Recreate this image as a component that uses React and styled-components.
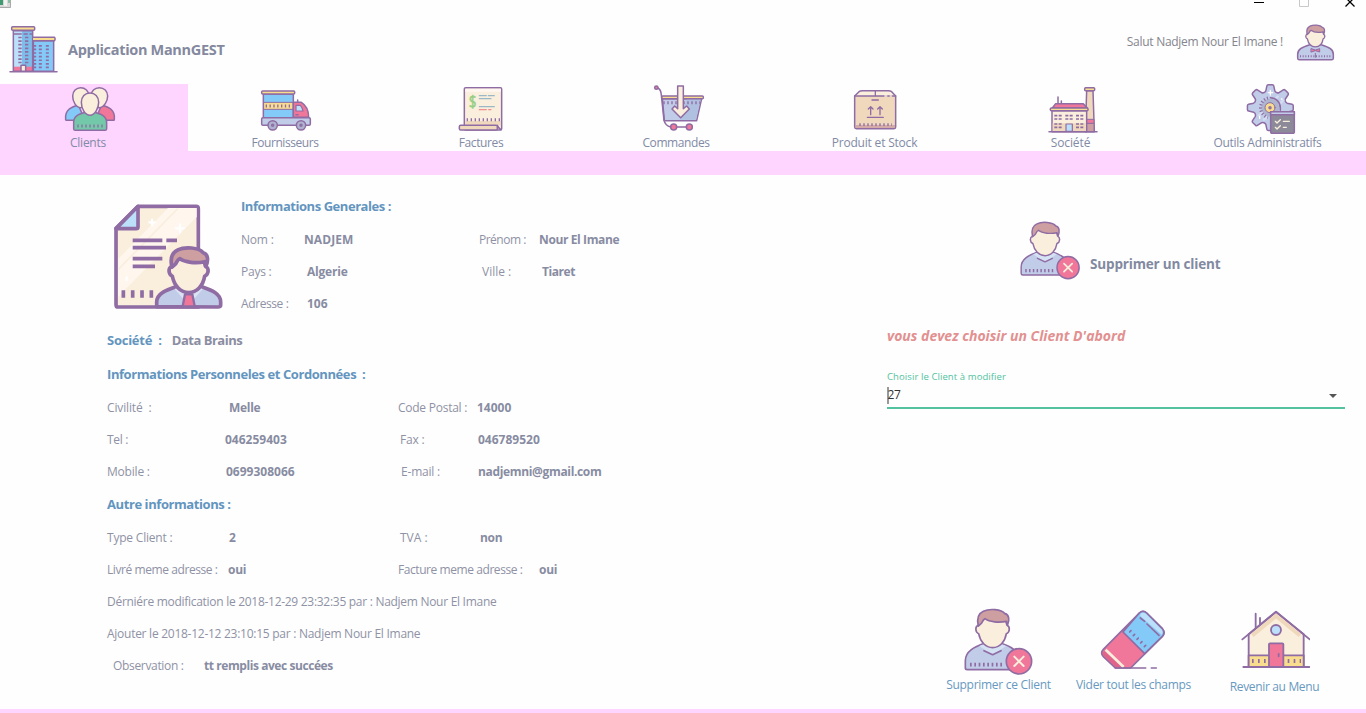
import React from 'react';
import styled, { createGlobalStyle, css } from 'styled-components';

const c = {
  pink: '#fdd5fe', line: '#8f6ca3', blue: '#84caf8', pale: '#bce0f9', yellow: '#f9dd8f',
  rose: '#f0779a', skin: '#faeedd', shirt: '#c0cce8', hair: '#cd9fa1', tan: '#f0d8bd',
};

const Global = createGlobalStyle`
  * { box-sizing: border-box; }
  body { margin: 0; background: #fff; overflow: hidden; }
`;

const Page = styled.div`
  width: 1366px; height: 713px; display: flex; flex-direction: column;
  font-family: 'Open Sans', 'Noto Sans', sans-serif; font-size: 12px; color: #8a8ea4;
  background: #fefefe; overflow: hidden;
`;
const TitleBar = styled.div`
  height: 10px; display: flex; justify-content: space-between; align-items: flex-start; flex: none;
`;
const Header = styled.header`
  height: 74px; flex: none; display: flex; align-items: flex-start; padding: 15px 31px 0 9px;
`;
const T = styled.span`
  white-space: pre; letter-spacing: ${p => p.$ls || 0}px; line-height: 20px;
`;
const AppName = styled(T)`
  font-size: 14.5px; font-weight: 700; color: #84899f; margin: 15px auto 0 10px;
`;
const Greeting = styled(T)`
  color: #85858c; margin: 7px 13px 0 0;
`;
const Avatar = styled.div`margin-top: -2px; display: flex;`;

const Nav = styled.nav`
  height: 67px; flex: none; display: grid;
  grid-template-columns: 197px 196px 195px 198.5px 196px 197px 1fr;
`;
const Tab = styled.div`
  width: 188px; height: 67px; background: ${p => (p.$active ? c.pink : 'transparent')};
`;
const TabContent = styled.div`
  width: 176px; display: flex; flex-direction: column; align-items: center;
`;
const TabLabel = styled(T)`
  color: #828aa5; line-height: 18px;
`;
const Band = styled.div`height: 24px; flex: none; background: ${c.pink};`;

const Main = styled.main`
  flex: 1; display: flex; min-height: 0;
`;
const Details = styled.section`
  width: 887px; flex: none; padding: 15px 0 0 107px;
`;
const Summary = styled.div`display: flex; margin-bottom: 4px;`;
const Portrait = styled.div`width: 134px; padding: 13px 0 0 6px;`;
const Row = styled.div`
  height: 32px; display: flex; align-items: center;
  ${p => p.$head && css`margin-bottom: 2px;`}
`;
const Cell = styled.div`
  width: ${p => (p.$w ? `${p.$w}px` : 'auto')}; padding-left: ${p => p.$pad || 0}px;
  display: flex; align-items: center; flex: none;
`;
const Label = styled(T)`color: #8f92a5;`;
const Value = styled(T)`font-weight: 700; color: #888ca2;`;
const Heading = styled(T)`font-size: 13px; font-weight: 700; color: #6395be;`;
const Company = styled(Heading)`color: #8a8da1; margin-left: 10px;`;

const Side = styled.section`
  width: 458px; display: flex; flex-direction: column;
`;
const SideTitle = styled.div`
  display: flex; align-items: flex-start; padding: 46px 0 0 132.5px; height: 151px;
`;
const SideName = styled(T)`
  font-size: 13.5px; font-weight: 700; color: #8289a0; margin: 33px 0 0 10px;
`;
const Warning = styled(T)`
  font-size: 14px; font-weight: 700; font-style: italic; color: #e29090;
`;
const FieldLabel = styled(T)`
  margin-top: 22px; font-size: 9.5px; line-height: 17px; color: #52c2a0;
`;
const Select = styled.div`
  height: 24px; border-bottom: 2px solid #52c2a0; display: flex; align-items: center;
  justify-content: space-between; padding-right: 8px; color: #333;
`;
const Typed = styled(T)`
  border-left: 2px solid #999; line-height: 15px; height: 17px; text-indent: -1.5px; margin-top: -2px;
`;
const Actions = styled.div`
  margin-top: auto; height: 108px; display: flex; align-items: flex-start;
`;
const Action = styled.div`
  display: flex; flex-direction: column; align-items: center; flex: none;
  width: ${p => p.$w}px; margin-left: ${p => p.$gap}px; padding-top: 7px;
`;
const ActionLabel = styled(T)`color: #6899c0; margin-top: ${p => p.$mt || 0}px; line-height: 18px;`;
const Footer = styled.footer`height: 4px; flex: none; background: ${c.pink};`;

const Svg = ({ box, w, h, sw = 4.5, children }) => (
  <svg viewBox={box} width={w} height={h} fill="none" stroke={c.line} strokeWidth={sw}
    strokeLinejoin="round" strokeLinecap="round" display="block">{children}</svg>
);
const Dash = ({ d, w = 7, a = '4 8', s = c.line }) => (
  <path d={d} strokeWidth={w} strokeDasharray={a} strokeLinecap="butt" stroke={s} />
);

const Head = ({ x, y, k, sw }) => (
  <g transform={`translate(${x} ${y}) scale(${k})`} strokeWidth={sw / k}>
    <path fill={c.skin} d="M143 76C132 80 134 97 144 101C149 126 165 143 186 143S223 126 227 101C238 97 239 80 229 76L222 50H150Z" />
    <path fill={c.hair} d="M143 78C137 52 147 39 158 34C176 25 212 27 223 41C237 44 236 62 231 74L227 64C205 69 176 66 163 56C155 60 156 67 152 70L143 78Z" />
  </g>
);

const Logo = () => (
  <Svg box="27 75 147 147" w={49} h={49}>
    <path fill={c.blue} d="M100 122H161V214H100Z" />
    <path fill={c.pale} stroke="none" d="M40 92H70V214H40Z" />
    <path fill="#7dbdea" stroke="none" d="M66 92H98V214H66Z" />
    <path fill={c.rose} stroke="none" d="M42 200H98V213H42Z" />
    <path d="M40 92H98V214H40ZM30 215H171" />
    <rect x="35" y="80" width="69" height="11" rx="3" fill={c.yellow} />
    <path fill={c.yellow} d="M100 112H164Q167 117 164 122H100" />
    <path fill={c.skin} d="M63 196H77V214H63Z" />
    <Dash d="M60 110V190M80 110V190" w={10} a="5 5.8" />
    <Dash d="M121 135V205M142 135V205M104 135V205" w={9} a="5 5.8" />
    <path d="M43 102H64M72 102H82M90 102H96" strokeWidth="4" />
  </Svg>
);
const Clients = () => (
  <Svg box="174 252 180 150" w={60} h={50}>
    <path fill={c.blue} d="M199 361Q196 361 197 355C195 330 213 321 235 315L255 361Z" />
    <path fill={c.rose} d="M340 361Q344 361 343 355C345 330 327 321 305 315L285 361Z" />
    <path fill={c.skin} d="M218 288C218 273 229 263 242 263S267 273 267 288S256 323 242 323S218 305 218 288Z" />
    <path fill={c.skin} d="M273 288C273 273 284 263 298 263S323 273 323 288S312 323 298 323S273 305 273 288Z" />
    <path fill="#72c8a9" d="M221 386V369C220 348 235 343 256 337H284C305 343 320 348 320 369V386Q320 391 315 391H226Q221 391 221 386Z" />
    <path fill={c.skin} d="M244 307C244 290 255 279 270 279S296 290 296 307S285 346 270 346S244 326 244 307Z" />
    <Dash d="M232 378H310" w={9} />
  </Svg>
);
const Truck = () => (
  <Svg box="765 252 180 150" w={60} h={50}>
    <path fill={c.blue} d="M790 282H880V353H790Z" />
    <path fill={c.yellow} d="M792 307H879V328H792Z" strokeWidth="3" />
    <rect x="785" y="273" width="99" height="9" rx="3" fill={c.yellow} />
    <Dash d="M797 318H875" w={9} a="4 7.5" />
    <path fill={c.rose} d="M880 307H904C919 316 926 334 926 352H880Z" />
    <path fill={c.pale} strokeWidth="3.5" d="M888 316H901Q908 324 909 333H888Z" />
    <path d="M893 300V306M888 344H894" />
    <rect x="785" y="353" width="146" height="23" rx="4" fill={c.shirt} />
    <circle cx="818" cy="376" r="14" fill="#aeb3cf" /><circle cx="903" cy="376" r="14" fill="#aeb3cf" />
    <circle cx="818" cy="376" r="3" /><circle cx="903" cy="376" r="3" />
  </Svg>
);
const Invoice = () => (
  <Svg box="63 27 180 150" w={60} h={50}>
    <rect x="103" y="38" width="112" height="127" rx="4" fill={c.skin} />
    <path fill={c.tan} stroke="none" d="M106 138H213V151H106Z" />
    <path fill="#fff6ef" stroke="none" d="M106 41H213V50H106Z" />
    <rect x="88" y="151" width="114" height="14" rx="4" fill={c.tan} />
    <path d="M202 151Q206 160 213 164" />
    <text x="117" y="97" fontSize="48" fontFamily="Open Sans" fill="#98ce82" stroke="#98ce82" strokeWidth="2" textLength="22" lengthAdjust="spacingAndGlyphs">$</text>
    <path stroke="#9bb8c8" strokeWidth="3.5" d="M148 62H169M175 62H193M148 71H183M148 95H193" />
    <path stroke="#f09090" strokeWidth="3.5" d="M148 104H169M176 104H183" />
    <Dash d="M110 134H212" w={9} />
  </Svg>
);
const Cart = () => (
  <Svg box="648 27 180 150" w={60} h={50}>
    <path fill={c.shirt} d="M697 71H815L800 137H703Z" />
    <path fill="#afc0e0" stroke="none" d="M770 73H812L798 134H750Z" />
    <Dash d="M700 83H810" w={9} />
    <rect x="695" y="63" width="125" height="8" rx="3" fill={c.yellow} />
    <path d="M684 39Q693 44 694 60L702 136Q706 152 722 156H770" />
    <circle cx="679" cy="38" r="5" fill={c.rose} />
    <path fill={c.skin} d="M743 33H760V101L770 93L778 102L752 128L726 102L734 93L743 101Z" />
    <circle cx="731" cy="156" r="9" fill={c.rose} /><circle cx="778" cy="156" r="9" fill={c.rose} />
  </Svg>
);
const Box = () => (
  <Svg box="75 27 180 150" w={60} h={50}>
    <path fill={c.skin} d="M104 63L117 50Q121 47 127 47H205Q211 47 215 50L227 63" />
    <path fill={c.tan} d="M104 63H227V156Q227 161 222 161H109Q104 161 104 156Z" />
    <path fill={c.hair} opacity=".8" stroke="none" d="M106 150H225V159H106Z" />
    <path d="M166 48V62M156 75H175M152 119V96M145 102L152 95L159 102M180 119V96M173 102L180 95L187 102M142 127H190" strokeWidth="4" />
    <path stroke={c.skin} strokeWidth="5" d="M195 63H200M211 63H214" />
    <Dash d="M118 149H216" w={8} />
  </Svg>
);
const Factory = () => (
  <Svg box="663 27 180 150" w={60} h={50}>
    <path fill={c.tan} d="M800 47H819L823 170H796Z" />
    <path fill={c.hair} d="M800 144H822V170H800Z" strokeWidth="3" />
    <path fill={c.rose} d="M800 133H822V145H800Z" strokeWidth="3" />
    <rect x="794" y="38" width="30" height="9" rx="3" fill={c.yellow} />
    <path d="M714 66V90M724 78V90" />
    <path fill={c.rose} d="M697 99L707 86H790L802 99Z" />
    <path fill={c.skin} d="M696 107H800V170H696Z" />
    <path fill={c.tan} stroke="none" d="M698 145H798V168H698Z" />
    <rect x="691" y="99" width="113" height="8" rx="3" fill={c.yellow} />
    <Dash d="M703 122H728M736 122H760M768 122H793M703 132H728M736 132H760M768 132H793M703 147H728M768 147H793M703 157H728M768 157H793" w={5} a="9 4" />
    <path fill={c.pale} strokeWidth="3.5" d="M738 147H757V169H738Z" />
    <path d="M687 170H831" />
  </Svg>
);
const gear = Array.from({ length: 8 }, (_, i) => {
  const at = (deg, r) => {
    const a = ((i * 45 + deg - 90) * Math.PI) / 180;
    return `${(481 + r * Math.cos(a)).toFixed(1)} ${(322 + r * Math.sin(a)).toFixed(1)}`;
  };
  return `${i ? 'L' : 'M'}${at(-15, 52)}L${at(-9, 66)}Q${at(-8, 69)} ${at(-5, 69)}L${at(5, 69)}Q${at(8, 69)} ${at(9, 66)}L${at(15, 52)}Q${at(22.5, 46)} ${at(30, 52)}`;
}).join('') + 'Z';
const Tools = () => (
  <Svg box="384 251 180 150" w={60} h={50}>
    <path fill={c.shirt} d={gear} />
    <path stroke="#dbe3f3" strokeWidth="8" d="M447 345L503 289M462 358L520 300" opacity=".7" />
    <circle cx="481" cy="322" r="27" stroke="none" fill="#aeb6cf" />
    <path d="M481 292A30 30 0 0 1 511 322V330" />
    <Dash d="M474 293A30 30 0 0 0 474 351" w={9} a="3.5 6" />
    <circle cx="480" cy="322" r="15" fill={c.yellow} strokeWidth="3" /><circle cx="480" cy="322" r="3" />
    <path stroke="#fff" strokeWidth="4" d="M481 270V284M475 277H488M449 348V354M514 296H516" />
    <path fill="#8c8a98" d="M482 334H553V395Q553 399 549 399H486Q482 399 482 395Z" />
    <path fill={c.shirt} d="M482 334H553V343H482Z" />
    <path stroke={c.skin} strokeWidth="4" d="M496 363L501 368L511 358M496 381L501 386L511 376M520 363H538M520 381H529" />
  </Svg>
);
const User = () => (
  <Svg box="558 69 117 114" w={39} h={38}>
    <path fill={c.shirt} d="M563 175V163C563 146 580 141 600 134H633C653 141 670 146 670 163V175Q670 179 666 179H567Q563 179 563 175Z" />
    <Head x={510} y={59} k={0.57} sw={4} />
    <path fill={c.rose} strokeWidth="3" d="M604 146L616 150L629 146V156L616 152L604 156Z" />
    <path d="M616 160V172" strokeWidth="3" />
    <Dash d="M570 169H663" w={6} a="3 5" />
  </Svg>
);
const RemoveUser = ({ w, h }) => (
  <Svg box="100 24 208 204" w={w} h={h} sw={5}>
    <path fill={c.shirt} d="M104 204V182C104 154 130 141 163 129H209C242 139 262 152 266 180V209H110Q104 209 104 204Z" />
    <path fill="#d5e2f4" stroke="none" d="M146 138L163 131H209L226 138L186 166Z" />
    <Head x={0} y={0} k={1} sw={5} />
    <path d="M160 152L186 164L211 152" />
    <Dash d="M118 194H222" w={11} a="5 8" />
    <circle cx="265" cy="184" r="38" fill={c.rose} />
    <path stroke={c.skin} strokeWidth="6" d="M251 170L279 198M279 170L251 198" />
  </Svg>
);
const Eraser = () => (
  <Svg box="511 22 201 186" w={67} h={62} sw={5}>
    <path fill={c.rose} d="M629 37Q640 27 651 37L698 84Q708 96 698 107L603 202H557L521 168Q511 157 521 146Z" />
    <path fill={c.blue} d="M629 37Q640 27 651 37L698 84Q708 96 698 107L645 159L580 94L629 37Z" />
    <path fill={c.pale} stroke="none" d="M634 38Q640 33 649 40L695 86Q702 95 696 102L631 45Z" />
    <path fill="#e0648a" stroke="none" d="M518 157L524 151L578 200H559L523 166Z" />
    <path stroke={c.skin} strokeWidth="8" strokeLinecap="butt" d="M528 147L582 199" />
    <path d="M632 52L645 62M652 70L688 104M600 94L604 90M611 105L615 101M622 116L626 112M633 127L637 123M644 138L648 134M557 202H648M665 202H680" />
  </Svg>
);
const House = () => (
  <Svg box="929 26 210 180" w={70} h={60} sw={5.5}>
    <path d="M976 43V85M989 56V74" />
    <path fill={c.skin} d="M955 105L1037 38L1120 105V203H955Z" />
    <path stroke={c.tan} strokeWidth="12" d="M966 108L1037 50L1109 108" strokeLinecap="butt" strokeLinejoin="miter" />
    <path fill={c.yellow} d="M955 168H1120V203H955Z" />
    <path d="M936 120L1037 37L1138 120" />
    <circle cx="1037" cy="92" r="15" fill={c.pale} />
    <path fill={c.rose} d="M1016 203V135Q1016 132 1019 132H1056Q1059 132 1059 135V203Z" />
    <path d="M1045 164V171M939 203H1137" />
    <Dash d="M965 185H1009M1072 185H1112" w={12} a="5 13" />
  </Svg>
);
const Dossier = () => (
  <Svg box="55 38 335 322" w={111.7} h={107.3} sw={11}>
    <path fill={c.skin} d="M130 48H304Q311 48 311 55V350H70Q64 350 64 343V114Z" />
    <path fill="#fff6ee" stroke="none" d="M220 53H306V80L70 320V206Z" />
    <path stroke={c.skin} strokeWidth="5" d="M248 56L72 236" />
    <path fill={c.pale} d="M130 48V110Q130 115 124 115H64Z" />
    <path stroke="#fff" strokeWidth="7" d="M172 88V104M164 96H180M256 102V126M244 114H268M96 261V269" />
    <path strokeLinecap="butt" d="M114 150H203M215 150H247M114 172H214M114 205H203M114 228H181" />
    <path strokeLinecap="butt" d="M86 300V322M114 300V322M142 300V322M170 300V322" />
    <path fill={c.shirt} d="M186 349V335C187 308 218 298 250 287H314C350 300 378 308 378 335V344Q378 350 370 350Z" />
    <path fill="#dbe3f3" stroke="none" d="M240 296L258 290L282 310L306 290L324 296L300 324L282 312L264 324Z" />
    <path fill={c.rose} strokeWidth="7" d="M271 312H293L300 348H264Z" />
    <Head x={64.4} y={139.2} k={1.17} sw={11} />
  </Svg>
);
const WindowIcon = () => (
  <svg width="12" height="9" viewBox="0 0 12 9">
    <path fill="#d8d8d8" d="M0 0H11V8H0Z" /><path fill="#3f9a72" d="M0 0H3V5H0Z" />
    <path fill="#f2f2f2" d="M4 0H7V6H4Z" /><path fill="#8cc0a0" d="M8 0H10V3H8Z" />
    <path stroke="#aaa" fill="none" d="M0 7.5H10.5V0" />
  </svg>
);
const WindowButtons = () => (
  <svg width="112" height="9" viewBox="1254 0 112 9" fill="none">
    <path stroke="#000" d="M1254 2.5H1264" />
    <path stroke="#c8c8c8" d="M1299.5 0V6.5H1308.5V0" />
    <path stroke="#000" strokeWidth="1.3" d="M1345.5 6.5L1354.5 -2.5M1354.5 6.5L1345.5 -2.5" />
  </svg>
);

const tabs = [
  ['Clients', Clients, -0.25], ['Fournisseurs', Truck, -0.42], ['Factures', Invoice, -0.38],
  ['Commandes', Cart, -0.42], ['Produit et Stock', Box, -0.2], ['Société', Factory, -0.1],
  ['Outils Administratifs', Tools, -0.28],
];

const Field = ({ label, value, w, total, pad, ls, vls }) => (
  <Cell $w={total} $pad={pad}>
    <Cell $w={w}><Label $ls={ls}>{label}</Label></Cell>
    <Value $ls={vls}>{value}</Value>
  </Cell>
);

export default function App() {
  return (
    <Page>
      <Global />
      <TitleBar><WindowIcon /><WindowButtons /></TitleBar>
      <Header>
        <Logo />
        <AppName $ls={-0.32}>Application MannGEST</AppName>
        <Greeting $ls={-0.28}>Salut Nadjem Nour El Imane !</Greeting>
        <Avatar><User /></Avatar>
      </Header>
      <Nav>
        {tabs.map(([name, Icon, ls], i) => (
          <Tab key={name} $active={i === 0}>
            <TabContent><Icon /><TabLabel $ls={ls}>{name}</TabLabel></TabContent>
          </Tab>
        ))}
      </Nav>
      <Band />
      <Main>
        <Details>
          <Summary>
            <Portrait><Dossier /></Portrait>
            <div>
              <Row $head><Heading $ls={-0.45}>Informations Generales :</Heading></Row>
              <Row>
                <Field label="Nom :" value="NADJEM" w={63} total={238} ls={-0.2} vls={0.1} />
                <Field label="Prénom :" value="Nour El Imane" w={60} ls={-0.5} vls={-0.38} />
              </Row>
              <Row>
                <Field label="Pays :" value="Algerie" w={66} total={238} ls={-0.25} vls={-0.2} />
                <Field label="Ville :" value="Tiaret" w={60} pad={3} vls={-0.45} />
              </Row>
              <Row><Field label="Adresse :" value="106" w={66} ls={-0.4} /></Row>
            </div>
          </Summary>
          <Row $head><Heading $ls={-0.25}>{'Société  :'}</Heading><Company $ls={-0.5}>Data Brains</Company></Row>
          <Row $head><Heading $ls={-0.42}>{'Informations Personneles et Cordonnées  :'}</Heading></Row>
          <Row>
            <Field label={'Civilité  :'} value="Melle" w={122} total={291} ls={-0.15} vls={-0.3} />
            <Field label="Code Postal :" value="14000" w={79} ls={-0.25} />
          </Row>
          <Row>
            <Field label="Tel :" value="046259403" w={118} total={291} ls={-0.3} />
            <Field label="Fax :" value="046789520" w={78} pad={2} ls={-0.2} />
          </Row>
          <Row>
            <Field label="Mobile :" value="0699308066" w={119} total={291} ls={-0.2} />
            <Field label="E-mail :" value="nadjemni@gmail.com" w={77} pad={3} ls={-0.2} vls={-0.34} />
          </Row>
          <Row $head><Heading $ls={-0.42}>Autre informations :</Heading></Row>
          <Row>
            <Field label="Type Client :" value="2" w={122} total={291} ls={-0.2} />
            <Field label="TVA :" value="non" w={80} pad={2} vls={-0.3} />
          </Row>
          <Row>
            <Field label="Livré meme adresse :" value="oui" w={121} total={291} ls={-0.42} vls={-0.3} />
            <Field label="Facture meme adresse :" value="oui" w={141} ls={-0.43} vls={-0.3} />
          </Row>
          <Row><Label $ls={-0.285}>Dérniére modification le 2018-12-29 23:32:35 par : Nadjem Nour El Imane</Label></Row>
          <Row><Label $ls={-0.265}>Ajouter le 2018-12-12 23:10:15 par : Nadjem Nour El Imane</Label></Row>
          <Row><Field label="Observation :" value="tt remplis avec succées" w={91} pad={6} ls={-0.33} vls={-0.43} /></Row>
        </Details>
        <Side>
          <SideTitle><RemoveUser w={60.6} h={59.5} /><SideName $ls={-0.18}>Supprimer un client</SideName></SideTitle>
          <Warning>vous devez choisir un Client D'abord</Warning>
          <FieldLabel $ls={0.09}>Choisir le Client à modifier</FieldLabel>
          <Select>
            <Typed $ls={-0.3}>27</Typed>
            <svg width="8" height="4" viewBox="0 0 8 4"><path fill="#555" d="M0 0H8L4 4Z" /></svg>
          </Select>
          <Actions>
            <Action $w={106} $gap={58.5}><RemoveUser w={69.3} h={68} /><ActionLabel $ls={-0.28}>Supprimer ce Client</ActionLabel></Action>
            <Action $w={116} $gap={24}><Eraser /><ActionLabel $mt={6} $ls={-0.29}>Vider tout les champs</ActionLabel></Action>
            <Action $w={90} $gap={38}><House /><ActionLabel $mt={10} $ls={-0.34}>Revenir au Menu</ActionLabel></Action>
          </Actions>
        </Side>
      </Main>
      <Footer />
    </Page>
  );
}
